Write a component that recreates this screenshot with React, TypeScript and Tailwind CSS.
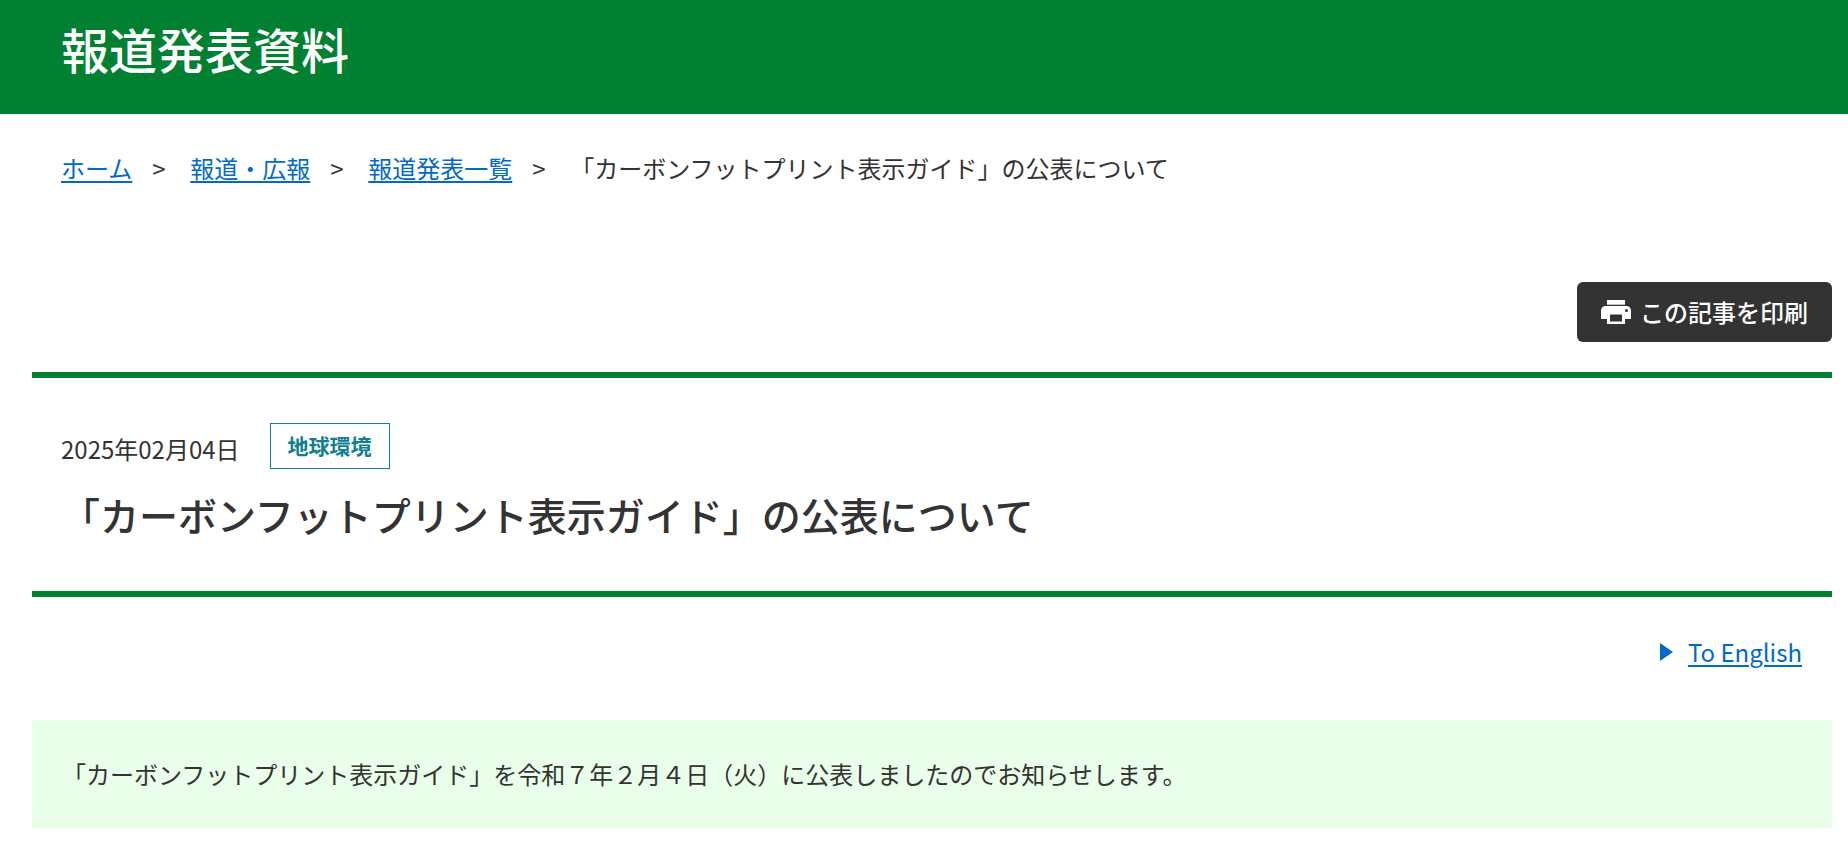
const crumbs = [
 {label: "ホーム", href: "#home"},
 {label: "報道・広報", href: "#press"},
 {label: "報道発表一覧", href: "#list"},
];

const guide = "「カーボンフットプリント表示ガイド」";

const PrintIcon: React.FC = () => (
 <svg viewBox="0 0 30 24" className="w-[30px] h-6" fill="currentColor" aria-hidden="true">
  <path d="M6 0H24V4.7H6Z" />
  <path
   fillRule="evenodd"
   d="M4.5 6H25.500C28 6 30 8 30 10.300V19H24V24H6V19H0V10.300C0 8 2 6 4.500 6ZM9 14.500V21.500H21V14.500ZM25.500 9A1.500 1.500 0 1 0 25.500 12A1.500 1.500 0 1 0 25.500 9Z"
  />
 </svg>
);

const App: React.FC = () => {
 return (
  <div className="font-['Noto_Sans_CJK_JP',sans-serif] text-2xl text-[#333] bg-white">
   <header className="bg-[#008030] px-[61px] pt-3 pb-[30px]">
    <p className="text-5xl leading-[72px] font-medium text-white">報道発表資料</p>
   </header>

   <nav aria-label="パンくずリスト" className="px-[61px] pt-[34px]">
    <ol className="flex flex-wrap leading-10">
     {crumbs.map((crumb) => (
      <li key={crumb.href} className="flex">
       <a href={crumb.href} className="text-[#006AC8] underline decoration-2 underline-offset-3">{crumb.label}</a>
       <span className="w-[58px] pl-5">&gt;</span>
      </li>
     ))}
     <li>{guide}の公表について</li>
    </ol>
   </nav>

   <main className="pl-8 pr-4 pt-[94px]">
    <div className="flex justify-end">
     <button type="button" className="flex items-center gap-[9px] h-[60px] px-6 rounded-md bg-[#333] text-white font-medium">
      <PrintIcon />
      この記事を印刷
     </button>
    </div>

    <div className="mt-[30px] px-[29px] pt-[45px] pb-[47px] border-y-6 border-[#008030]">
     <div className="flex items-end gap-[30px]">
      <time dateTime="2025-02-04" className="leading-10">2025年02月04日</time>
      <span className="border border-[#108090] text-[#108090] px-[17px] pb-0.5 text-[21px] leading-[42px] font-bold">地球環境</span>
     </div>
     <h1 className="mt-[15px] text-[39px] leading-[60px] font-medium">{guide}の公表について</h1>
    </div>

    <p className="flex items-center justify-end mt-[35px] pr-[30px] leading-10">
     <svg viewBox="0 0 13 18" className="w-[13px] h-[18px] mr-[15px]" fill="#006AC8" aria-hidden="true">
      <path d="M0 0L13 9L0 18Z" />
     </svg>
     <a href="#english" className="text-[#006AC8] underline decoration-2 underline-offset-3">To English</a>
    </p>

    <p className="mt-12 px-[30px] py-9 leading-9 bg-[#E9FFE9]">
     {guide}を令和７年２月４日（火）に公表しましたのでお知らせします。
    </p>
   </main>
  </div>
 );
};
export default App;
